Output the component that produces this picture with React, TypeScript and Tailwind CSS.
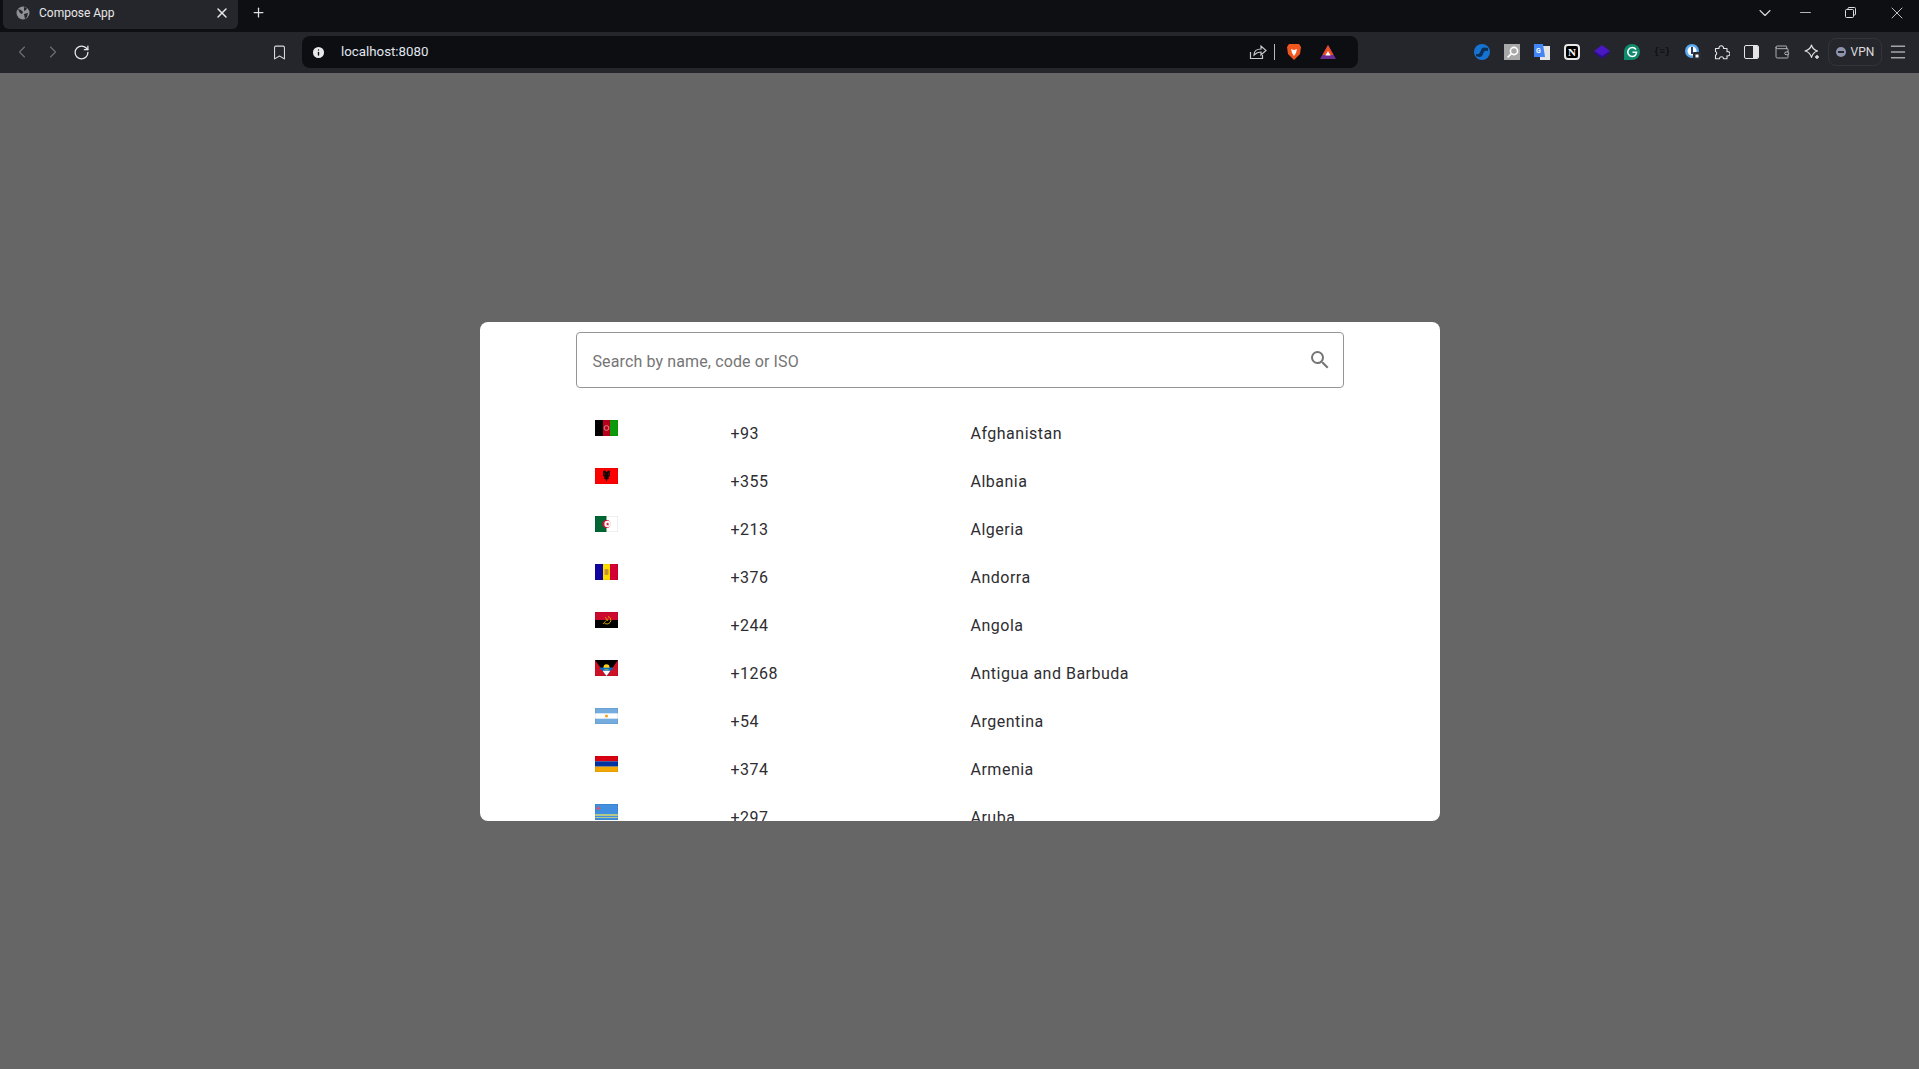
import { ChevronDown, ChevronLeft, ChevronRight, Minus, Plus, RotateCw, X, Bookmark, Info, Wallet, Menu } from 'lucide-react';

const countries = [
  { code: '+93', name: 'Afghanistan', flag: 'af' },
  { code: '+355', name: 'Albania', flag: 'al' },
  { code: '+213', name: 'Algeria', flag: 'dz' },
  { code: '+376', name: 'Andorra', flag: 'ad' },
  { code: '+244', name: 'Angola', flag: 'ao' },
  { code: '+1268', name: 'Antigua and Barbuda', flag: 'ag' },
  { code: '+54', name: 'Argentina', flag: 'ar' },
  { code: '+374', name: 'Armenia', flag: 'am' },
  { code: '+297', name: 'Aruba', flag: 'aw' },
];

function Flag({ id }: { id: string }) {
  return (
    <svg width="23" height="16" viewBox="0 0 23 16" className="block shrink-0">
      {id === 'af' && (
        <>
          <rect width="8" height="16" fill="#000" />
          <rect x="8" width="7" height="16" fill="#b8001c" />
          <rect x="15" width="8" height="16" fill="#0a9a0a" />
          <circle cx="11.5" cy="8" r="2.4" fill="none" stroke="#d88a8a" strokeWidth="1" />
        </>
      )}
      {id === 'al' && (
        <>
          <rect width="23" height="16" fill="#ff0000" />
          <path d="M11.500 4L10 2.500 8 3v5l1.500 1L9 11h1.500l1 3 1-3H14l-.5-2L15 8V3l-2-.5z" fill="#1a0505" />
          <path d="M9.200 4.500v3M13.800 4.500v3" stroke="#a00000" strokeWidth="0.6" />
        </>
      )}
      {id === 'dz' && (
        <>
          <rect width="23" height="16" fill="#fff" />
          <rect width="11.5" height="16" fill="#006633" />
          <circle cx="11.5" cy="8" r="4" fill="#d21034" />
          <circle cx="12.6" cy="8" r="3.2" fill="#fff" />
          <path d="M12.600 6.200l.5 1.300 1.400 0-1.100.9.4 1.400-1.200-.8-1.100.8.4-1.400-1.100-.9 1.400 0z" fill="#d21034" />
        </>
      )}
      {id === 'ad' && (
        <>
          <rect width="8" height="16" fill="#10069f" />
          <rect x="8" width="7" height="16" fill="#fedd00" />
          <rect x="15" width="8" height="16" fill="#d50032" />
          <rect x="9.5" y="5" width="4" height="6" rx="1" fill="#c7952c" />
        </>
      )}
      {id === 'ao' && (
        <>
          <rect width="23" height="8" fill="#cc092f" />
          <rect y="8" width="23" height="8" fill="#000" />
          <path d="M13 4.500a3.800 3.800 0 11-4 6" fill="none" stroke="#e0a800" strokeWidth="1" />
          <path d="M8 12l5-5.500M10 5l3 4" stroke="#e0a800" strokeWidth="0.8" />
        </>
      )}
      {id === 'ag' && (
        <>
          <rect width="23" height="16" fill="#ce1126" />
          <path d="M0 0h23l-11.5 16z" fill="#000" />
          <path d="M5.500 7.700h12L11.500 16z" fill="#0072c6" />
          <path d="M7.600 10.700h7.800L11.500 16z" fill="#fff" />
          <circle cx="11.500" cy="7.200" r="3" fill="#fcd116" />
          <rect x="5" y="7.700" width="13" height="1.800" fill="#0072c6" />
        </>
      )}
      {id === 'ar' && (
        <>
          <rect width="23" height="16" fill="#74acdf" />
          <rect y="5.330" width="23" height="5.330" fill="#fff" />
          <circle cx="11.500" cy="8" r="1.600" fill="#f6a623" />
        </>
      )}
      {id === 'am' && (
        <>
          <rect width="23" height="5.330" fill="#d90012" />
          <rect y="5.330" width="23" height="5.330" fill="#0033a0" />
          <rect y="10.670" width="23" height="5.330" fill="#f2a800" />
        </>
      )}
      {id === 'aw' && (
        <>
          <rect width="23" height="16" fill="#418fde" />
          <rect y="10" width="23" height="2" fill="#b5c98a" />
          <rect y="13" width="23" height="1" fill="#b5c98a" />
          <path d="M3.200 1.500l.7 2 2 .7-2 .7-.7 2-.7-2-2-.7 2-.7z" fill="#e8505b" />
        </>
      )}
      <rect x="0.250" y="0.250" width="22.500" height="15.500" fill="none" stroke="#000" strokeOpacity="0.12" strokeWidth="0.5" />
    </svg>
  );
}

function Toolbar() {
  return (
    <div className="flex h-[41px] shrink-0 items-center bg-[#25262b] pb-px">
      <ChevronLeft size={20} strokeWidth={1.3} className="ml-[12px] text-[#6e7076]" />
      <ChevronRight size={20} strokeWidth={1.3} className="ml-[11px] text-[#6e7076]" />
      <RotateCw size={17} strokeWidth={1.8} className="ml-[10px] text-[#e6e6e8]" />
      <Bookmark size={17} strokeWidth={1.5} className="ml-[181px] text-[#d8d8da]" />
      <div className="ml-[14px] flex h-[32px] w-[1056px] items-center rounded-[8px] bg-[#0d0e12] pl-[9px] pr-[21px]">
        <Info size={15} strokeWidth={2.2} fill="#e8e8ea" className="text-[#0d0e12]" />
        <span className="ml-[15px] text-[13.3px] text-[#e0e6ee]">localhost:8080</span>
        <div className="flex-1" />
        <svg width="18" height="16" viewBox="0 0 18 16" fill="none" stroke="#c9c9cc" strokeWidth="1.2">
          <path d="M1.500 8v6.500h12V11" />
          <path d="M5 11c0-4 3-6 7-6V2l5 4.500L12 11V8c-3 0-5 1-7 3z" />
        </svg>
        <div className="ml-[7px] h-[16px] w-px bg-[#b8b8bb]" />
        <svg width="16" height="18" viewBox="0 0 16 18" className="ml-[11px]">
          <path d="M3 1h10l2 3-1 7-6 6-6-6-1-7z" fill="#f1561f" />
          <path d="M5 6l3 1 3-1-1 4-2 3-2-3z" fill="#fff" />
        </svg>
        <svg width="18" height="16" viewBox="0 0 18 16" className="ml-[17px]">
          <path d="M9 1l8 14H1z" fill="#6b2d91" />
          <path d="M9 1l5.500 10h-11z" fill="#f04e23" />
          <path d="M9 7l2.600 4.600H6.400z" fill="#fff" />
        </svg>
      </div>
      <div className="ml-[116px] flex items-center">
        <svg width="16" height="16" viewBox="0 0 16 16">
          <circle cx="8" cy="8" r="8" fill="#1673d1" />
          <path d="M2 10c3 1 4-1 5-4s3-3 7-2v3c-3-1-4 0-5 3s-3 4-7 2z" fill="#0b2f57" />
        </svg>
        <div className="ml-[14px] flex size-[16px] items-center justify-center bg-[#a8a8a8]">
          <svg width="13" height="13" viewBox="0 0 13 13" fill="none" stroke="#fff" strokeWidth="1.600">
            <circle cx="8" cy="5" r="3.600" />
            <path d="M5.400 7.600L1.500 11.500" />
          </svg>
        </div>
        <svg width="16" height="16" viewBox="0 0 16 16" className="ml-[14px]">
          <rect x="6" y="2" width="10" height="14" fill="#e4e4e4" />
          <path d="M0 0h9l2 13H0z" fill="#4285f4" />
          <text x="2" y="9" fontSize="7" fontWeight="700" fill="#fff" fontFamily="Roboto, sans-serif">G</text>
        </svg>
        <div className="ml-[14px] flex size-[16px] items-center justify-center rounded-[4px] border-2 border-[#e8e8e8] bg-black font-['Liberation_Serif',serif] text-[11px] font-bold leading-none text-white">N</div>
        <svg width="16" height="16" viewBox="0 0 16 16" className="ml-[14px]">
          <path d="M8 4l8 5-8 6-8-6z" fill="#2a1080" />
          <path d="M8 1l8 6-8 5-8-5z" fill="#4a17c4" />
        </svg>
        <svg width="16" height="16" viewBox="0 0 16 16" className="ml-[14px]">
          <path d="M8 0a8 8 0 110 16H0V8a8 8 0 018-8z" fill="#0f8a6c" />
          <path d="M12 5.500A4.500 4.500 0 108 12.500c2.500 0 4.300-1.600 4.500-4.200H8.500" fill="none" stroke="#fff" strokeWidth="1.600" />
        </svg>
        <span className="ml-[14px] w-[16px] text-center font-['Liberation_Mono',monospace] text-[9px] font-bold leading-none text-[#0d0e12]">{'{≡}'}</span>
        <svg width="16" height="16" viewBox="0 0 16 16" className="ml-[15px] -mr-px">
          <circle cx="7" cy="7" r="7" fill="#5aa9f0" />
          <circle cx="7" cy="7" r="4.500" fill="#fff" />
          <rect x="6" y="3" width="2" height="7" fill="#1a3f6b" />
          <rect x="8" y="8" width="8" height="8" rx="1" fill="#2b2b30" />
          <rect x="10.500" y="10.500" width="3" height="3" fill="#fff" />
        </svg>
        <svg width="16" height="16" viewBox="0 0 16 16" fill="none" stroke="#e4e4e6" strokeWidth="1.100" strokeLinejoin="round" className="ml-[14px]">
          <path d="M1.500 4.500h3.500a2.300 2.300 0 114.500 0H13v3.200a2.200 2.200 0 110 4.100v3H9.500a2 2 0 00-4 0h-4v-3.600a2 2 0 000-3.700z" />
        </svg>
        <div className="ml-[14px] flex h-[14px] w-[15px] overflow-hidden rounded-[2px] border border-[#e4e4e6]">
          <div className="flex-1" />
          <div className="w-[5px] bg-[#e4e4e6]" />
        </div>
        <Wallet size={16} strokeWidth={1.3} className="ml-[15px] text-[#c4c4c6]" />
        <svg width="16" height="16" viewBox="0 0 16 16" fill="none" stroke="#e4e4e6" strokeWidth="1.100" strokeLinejoin="round" className="ml-[14px]">
          <path d="M7.500 1c.8 3 2.500 5 6 6-3.500 1-5.200 3-6 6.500C6.700 10 5 8 1 7c4-1 5.700-3 6.500-6z" />
          <path d="M13 11v4M11 13h4" strokeWidth="1.400" />
        </svg>
        <div className="ml-[8px] flex h-[28px] w-[54px] items-center justify-center gap-[5px] rounded-[8px] border border-[#33343a]">
          <div className="flex size-[10px] items-center justify-center rounded-full bg-[#8f94ad]">
            <div className="h-[2px] w-[6px] bg-[#25262b]" />
          </div>
          <span className="text-[12px] text-[#dcdcde]">VPN</span>
        </div>
        <Menu size={20} strokeWidth={1.2} className="ml-[6px] text-[#e6e6e8]" />
      </div>
    </div>
  );
}

export default function App() {
  return (
    <div className="flex h-[1069px] w-[1919px] flex-col overflow-hidden bg-[#666666] font-['Roboto',sans-serif]">
      <div className="flex h-[32px] shrink-0 items-start bg-[#0e0f13]">
        <div className="ml-[3px] flex h-[29px] w-[235px] items-center rounded-b-[6px] bg-[#25262b] pb-[4px] pl-[13px]">
          <svg width="14" height="14" viewBox="0 0 14 14" className="shrink-0">
            <circle cx="7" cy="7" r="6.500" fill="#8f9094" />
            <path d="M2 3l3 1 2 2-1 2-2-1zM8 1l3 1-1 2-2 1zM8 8l4-1-1 4-2 2z" fill="#25262b" />
          </svg>
          <span className="ml-[9px] text-[12px] text-[#e8e8ea]">Compose App</span>
          <X size={16} strokeWidth={2.2} className="ml-auto mr-[8px] text-[#e8e8ea]" />
        </div>
        <div className="flex h-[25px] flex-1 items-center">
          <Plus size={15} strokeWidth={2} className="ml-[13px] text-[#e0e0e2]" />
          <div className="flex-1" />
          <ChevronDown size={20} strokeWidth={1.300} className="mr-[22px] text-[#dcdcde]" />
          <Minus size={17} strokeWidth={1.100} className="mr-[31px] text-[#e6e6e8]" />
          <svg width="11" height="11" viewBox="0 0 11 11" fill="none" stroke="#dcdcde" strokeWidth="1" className="mr-[31px]">
            <rect x="0.500" y="2.500" width="8" height="8" rx="1" />
            <path d="M3 2.500V1.500a1 1 0 011-1h5.500a1 1 0 011 1V7a1 1 0 01-1 1h-1" />
          </svg>
          <X size={20} strokeWidth={1} className="mr-[12px] text-[#e6e6e8]" />
        </div>
      </div>
      <Toolbar />
      <div className="flex flex-1 justify-center pt-[249px]">
        <div className="flex h-[499px] w-[960px] flex-col items-center overflow-hidden rounded-[8px] bg-white">
          <div className="mt-[10px] flex h-[56px] w-[768px] shrink-0 items-center justify-between rounded-[4px] border border-[#949494] pl-[15px] pr-[11px]">
            <span className="pl-px pt-[3px] text-[16px] tracking-[0.12px] text-[#757575]">Search by name, code or ISO</span>
            <svg width="24" height="24" viewBox="0 0 24 24" fill="#757575">
              <path d="M15.500 14h-.79l-.28-.27A6.471 6.471 0 0016 9.500 6.500 6.500 0 109.500 16c1.610 0 3.090-.59 4.230-1.570l.27.28v.79l5 4.990L20.490 19l-4.990-5zm-6 0C7.010 14 5 11.990 5 9.500S7.010 5 9.500 5 14 7.010 14 9.500 11.990 14 9.500 14z" />
            </svg>
          </div>
          <div className="mt-[21px] flex w-[768px] flex-col pl-[19px]">
            {countries.map((c) => (
              <div key={c.flag} className="flex h-[48px] shrink-0">
                <div className="w-[136px] pt-[11px]">
                  <Flag id={c.flag} />
                </div>
                <div className="w-[240px] pt-[13px] text-[16px] leading-[24px] tracking-[0.5px] text-[#2e2d31]">{c.code}</div>
                <div className="pt-[13px] text-[16px] leading-[24px] tracking-[0.5px] text-[#2e2d31]">{c.name}</div>
              </div>
            ))}
          </div>
        </div>
      </div>
    </div>
  );
}
